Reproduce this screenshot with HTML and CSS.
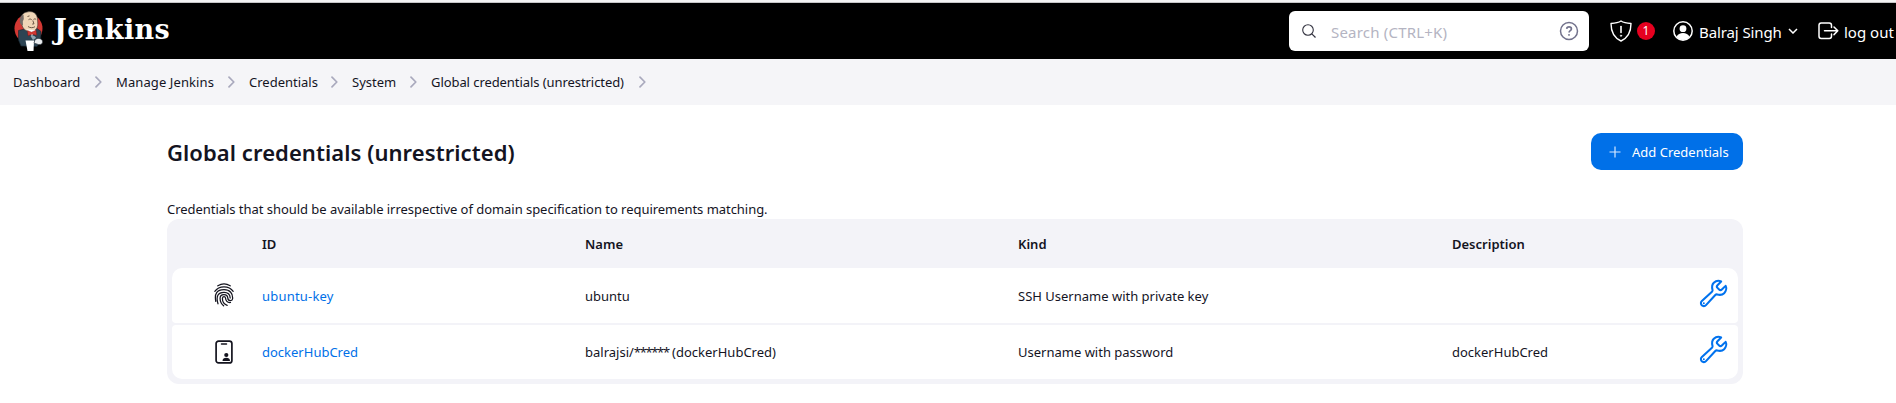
FILE: index.html
```html
<!DOCTYPE html>
<html lang="en">
<head>
<meta charset="utf-8">
<title>Global credentials (unrestricted) - Jenkins</title>
<link rel="stylesheet" href="styles.css">
</head>
<body>
<svg class="defs" aria-hidden="true">
  <symbol id="chev" viewBox="0 0 7 12"><path d="M1 1.2 5.8 6 1 10.8" fill="none" stroke="#a9a9bd" stroke-width="1.7" stroke-linecap="round" stroke-linejoin="round"/></symbol>
  <symbol id="wrench" viewBox="0 0 512 512"><path d="M393.87 190a32.1 32.1 0 01-45.25 0l-26.57-26.57a32.09 32.09 0 010-45.26L382.19 58a1 1 0 00-.3-1.64c-38.82-16.64-89.15-8.16-121.11 23.57-30.58 30.35-32.32 76-21.12 115.84a31.93 31.93 0 01-9.06 32.08L64 380a48.17 48.17 0 1068 68l153.86-167a31.93 31.93 0 0131.6-9.13c39.54 10.59 84.54 8.6 114.72-21.19 32.49-32.06 42.32-87.33 24.6-120.62a1 1 0 00-1.61-.24z" fill="none" stroke="#0072ee" stroke-width="34" stroke-miterlimit="10"/><circle cx="96" cy="416" r="16" fill="#0072ee"/></symbol>
</svg>

<header class="header">
  <a class="brand">
    <svg class="butler" width="30" height="41" viewBox="0 0 30 41">
      <ellipse cx="14.5" cy="17.5" rx="14" ry="14.5" fill="#d33833"/>
      <path d="M4.500 19.500 11 18l12-.5 4 3-.5 10-3.500 5-16-.5L4.500 29z" fill="#2d4453" stroke="#17252f" stroke-width=".6"/>
      <path d="M7 8C7 4 9.500 1.500 13 1c6-1.500 10 1.500 10.500 7l.3 5c0 5-3.500 8-8 7.500C10 20.500 7 15 7 8z" fill="#f0d6b7" stroke="#3b3632" stroke-width=".6"/>
      <path d="M6.500 13C5 9 6 5 9.500 3.500L9.800 8l-1 2.500.2 4z" fill="#756c67"/>
      <path d="M14.500 8.700c1-.9 2.400-.9 3.200 0m1.800-.3c.9-.7 1.900-.6 2.700.1M18.800 9.500l1.200 3.300-1.800.3M14 15.500c2 1.600 5 1.500 7 .2M13.500 5.500l2-.6" fill="none" stroke="#4d3a2b" stroke-width=".8"/>
      <path d="m12.500 18.500 5.500 6.500 4-6z" fill="#fff"/>
      <path d="m13.500 19.500 4 1.700 4.500-2 .7 5-4.700-1-4 1.500z" fill="#d33833" stroke="#81100c" stroke-width=".4"/>
      <path d="M16.500 25c2-1 5 0 5.500 2l-3 2z" fill="#8fa6b2"/>
      <path d="M11.500 29.500h8.500l-.5 10.500h-6z" fill="#fff"/>
      <path d="M21 29c2-2.500 6.500-2 7.500 1 .5 3-2 4-4 3.500L20 32z" fill="#e9ecee" stroke="#30383e" stroke-width=".6"/>
    </svg>
    <span class="wordmark">Jenkins</span>
  </a>
  <div class="search">
    <svg class="search-icon" width="14" height="14" viewBox="0 0 14 14"><circle cx="6" cy="6" r="5.300" fill="none" stroke="#333340" stroke-width="1.100"/><path d="m9.800 9.800 3.700 3.700" stroke="#333340" stroke-width="1.200"/></svg>
    <span class="placeholder">Search (CTRL+K)</span>
    <svg class="help" width="20" height="20" viewBox="0 0 20 20" fill="none" stroke="#72728c"><circle cx="10" cy="10" r="8.500" stroke-width="1.500"/><path d="M7.700 7.900C7.800 6.500 8.700 5.900 10 5.900s2.400.8 2.400 2c0 1.700-2.300 1.700-2.300 3.500" stroke-width="1.700"/><circle cx="10" cy="13.900" r=".55" fill="#72728c" stroke-width=".8"/></svg>
  </div>
  <a class="monitor">
    <svg width="22" height="22" viewBox="0 0 22 22" fill="none" stroke="#fff" stroke-linecap="round" stroke-linejoin="round"><path d="M11 1C8.500 2.700 5 3.300 1 3.500 1 12 3.500 17.500 11 21c7.500-3.500 10-9 10-17.500C17 3.300 13.500 2.700 11 1z" stroke-width="1.400"/><path d="M11 6.500v6" stroke-width="1.600"/><circle cx="11" cy="15.700" r=".7" fill="#fff" stroke-width=".6"/></svg>
    <span class="badge">1</span>
  </a>
  <a class="user">
    <svg width="20" height="20" viewBox="0 0 20 20"><circle cx="10" cy="10" r="9.200" fill="none" stroke="#fff" stroke-width="1.500"/><circle cx="10" cy="7.700" r="3.400" fill="#fff"/><path d="M3.500 16c1.200-3 3.600-4 6.500-4s5.300 1 6.500 4c-1.700 2-4 3-6.500 3s-4.800-1-6.500-3z" fill="#fff"/></svg>
    <span class="user-name">Balraj Singh</span>
    <svg class="caret" width="10" height="6" viewBox="0 0 10 6"><path d="m1 1 4 4 4-4" fill="none" stroke="#fff" stroke-width="1.500"/></svg>
  </a>
  <a class="logout">
    <svg width="21" height="18" viewBox="0 0 21 18" fill="none" stroke="#fff" stroke-width="1.500" stroke-linecap="round" stroke-linejoin="round"><path d="M13.500 5.500V3.200c0-1.300-.9-2.200-2.200-2.200H3.200C1.900 1 1 1.900 1 3.200v11.100c0 1.300.9 2.200 2.200 2.200h8.100c1.300 0 2.200-.9 2.200-2.200V12M6.500 8.800h13M16 5l3.800 3.800L16 12.600"/></svg>
    <span class="logout-label">log out</span>
  </a>
</header>

<nav class="crumbs">
  <span class="c1">Dashboard</span><svg><use href="#chev"/></svg>
  <span class="c2">Manage Jenkins</span><svg><use href="#chev"/></svg>
  <span class="c3">Credentials</span><svg><use href="#chev"/></svg>
  <span class="c4">System</span><svg><use href="#chev"/></svg>
  <span class="c5">Global credentials (unrestricted)</span><svg><use href="#chev"/></svg>
</nav>

<main class="main">
  <div class="title-bar">
    <h1>Global credentials (unrestricted)</h1>
    <a class="add"><svg width="12" height="12" viewBox="0 0 12 12"><path d="M6 .5v11M.5 6h11" stroke="#d5e8ff" stroke-width="1.200"/></svg><span>Add Credentials</span></a>
  </div>
  <p class="intro">Credentials that should be available irrespective of domain specification to requirements matching.</p>
  <section class="table">
    <div class="row head"><span></span><span>ID</span><span>Name</span><span>Kind</span><span>Description</span><span></span></div>
    <div class="row first">
      <svg class="kind-icon finger" width="20" height="24" viewBox="0 0 20 24" fill="none" stroke="#14141f" stroke-width="1.250" stroke-linecap="round"><path d="M3.800 2.800C7.500.5 12.500.5 16.200 2.800M.8 8.300C5 2.300 15 2.300 19.200 8.300M1.800 18.300C.2 10.500 3 6.700 10 6.700c6 0 9 3.700 8.600 9-.2 2.600-4.600 2.600-4.800-.6-.3-4.700-7.600-4.700-7.700 0-.1 3.300 1.300 5.700 3.500 7.700M4 20.800C1.700 13.300 4 9.400 10 9.400c3.800 0 6 2.300 6.200 5.600M13.200 22.400C9.500 21 8.200 18 8.500 15c.2-1.900 2.800-1.900 3 0 .3 3.300 2 4.700 5 4.500"/></svg>
      <a class="key">ubuntu-key</a><span>ubuntu</span><span>SSH Username with private key</span><span></span>
      <svg class="tool"><use href="#wrench"/></svg>
    </div>
    <div class="row last">
      <svg class="kind-icon" width="18" height="24" viewBox="0 0 18 24"><rect x="1.100" y="1.100" width="15.800" height="21.800" rx="2.500" fill="none" stroke="#14141f" stroke-width="1.700"/><path d="M6.500 4h5" stroke="#14141f" stroke-width="1.500" stroke-linecap="round"/><circle cx="11.300" cy="15" r="2.100" fill="#14141f"/><path d="M7.500 21c0-2.500 1.600-3.200 3.800-3.200S15 18.500 15 21z" fill="#14141f"/></svg>
      <a>dockerHubCred</a><span>balrajsi/<span class="mask">******</span> (dockerHubCred)</span><span>Username with password</span><span>dockerHubCred</span>
      <svg class="tool"><use href="#wrench"/></svg>
    </div>
  </section>
</main>
</body>
</html>
```
FILE: styles.css
```css
* { box-sizing: border-box; }
body {
  margin: 0;
  background: #fff;
  color: #14141f;
  font: 13px/20px "Noto Sans", "Open Sans", sans-serif;
  overflow: hidden;
}
span, a, h1, p { white-space: nowrap; }
.defs { display: none; }

.header {
  display: flex;
  align-items: center;
  height: 59px;
  padding: 1px 0 0 14px;
  background: #000;
  border-top: 2px solid #f3f3f4;
  box-shadow: inset 0 1px #c5c5c7;
  color: #fff;
  font-size: 15px;
}
.brand { display: flex; align-items: center; width: 1275px; }
.wordmark {
  margin: -2px 0 0 10px;
  font: bold 27px/36px "DejaVu Serif", serif;
  letter-spacing: 0.4px;
}
.search {
  display: flex;
  align-items: center;
  flex: none;
  width: 300px;
  height: 40px;
  padding: 0 10px 0 13px;
  border-radius: 6px;
  background: #fff;
  color: #b4b4c2;
}
.placeholder { flex: 1; margin: 2px 0 0 15px; letter-spacing: 0.2px; }
.monitor { display: flex; align-items: center; flex: none; width: 63px; margin-left: 21px; gap: 5px; }
.badge {
  width: 18px;
  height: 18px;
  border-radius: 50%;
  background: #e6001f;
  text-align: center;
  font-size: 12px;
  line-height: 18px;
}
.user { display: flex; align-items: center; flex: none; width: 145px; }
.user-name { width: 90px; margin: 2px 0 0 6px; letter-spacing: -0.1px; }
.caret { margin-left: -1px; }
.logout { display: flex; align-items: center; flex: none; }
.logout-label { margin: 2px 0 0 5px; }

.crumbs { display: flex; align-items: center; height: 46px; padding-left: 13px; background: #f5f5f8; }
.crumbs svg { width: 7px; height: 12px; margin-right: 14px; }
.c1 { width: 82px; }
.c2 { width: 112px; letter-spacing: 0.1px; }
.c3 { width: 82px; }
.c4 { width: 58px; }
.c5 { width: 208px; letter-spacing: -0.07px; }

.main { width: 1576px; margin-left: 167px; padding-top: 28px; }
.title-bar { display: flex; align-items: center; justify-content: space-between; height: 37px; }
h1 { margin: 0; font-size: 22px; font-weight: 600; line-height: 32px; letter-spacing: 0.07px; }
.add {
  display: flex;
  align-items: center;
  width: 152px;
  height: 37px;
  padding-left: 18px;
  gap: 11px;
  border-radius: 10px;
  background: #0070e8;
  color: #fff;
}
.intro { margin: 29px 0 0; height: 20px; letter-spacing: -0.04px; }

.table { height: 165px; padding: 0 5px 5px; border-radius: 12px; background: #f3f3f8; }
.row {
  display: grid;
  grid-template-columns: 90px 323px 433px 434px 246px 30px;
  align-items: center;
  height: 55px;
  background: #fff;
}
.head { height: 49px; background: none; font-weight: 600; }
.first { border-radius: 10px 10px 4px 4px; }
.last { margin-top: 2px; height: 54px; border-radius: 4px 4px 10px 10px; }
.row a { color: #0070e8; }
.key { letter-spacing: 0.2px; }
.mask { letter-spacing: -1.35px; }
.kind-icon { margin-left: 52px; justify-self: center; translate: -19px 0; }
.finger { margin-bottom: 2px; }
.tool { width: 31px; height: 31px; margin-bottom: 5px; }
```
